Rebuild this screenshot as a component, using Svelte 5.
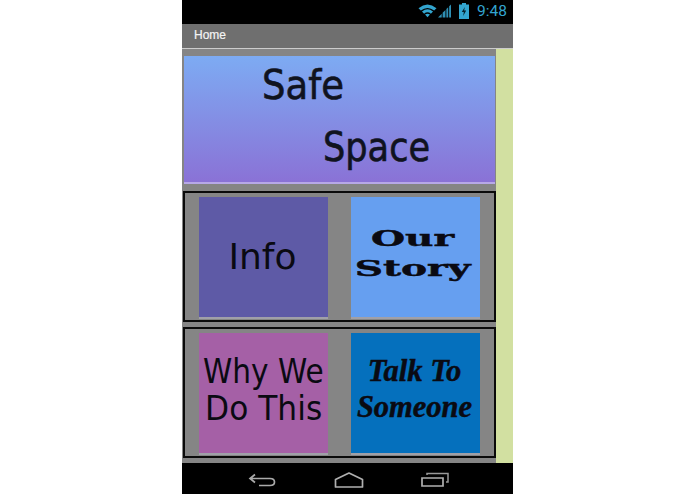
<script>
  const rows = [
    [
      { cls: 'info', lines: ['Info'] },
      { cls: 'story', lines: ['Our', 'Story'] }
    ],
    [
      { cls: 'why', lines: ['Why We', 'Do This'] },
      { cls: 'talk', lines: ['Talk To', 'Someone'] }
    ]
  ];
</script>

<div class="page">
  <div class="phone">
    <div class="status">
      <svg class="wifi" viewBox="0 0 20 15" width="19" height="15">
        <path d="M0.5 5 Q10 -2.5 19.5 5 L17 7.6 Q10 2 3 7.6Z" fill="#33a5cf" />
        <path d="M4.2 8.6 Q10 4 15.8 8.6 L13.6 10.8 Q10 8 6.4 10.8Z" fill="#33a5cf" />
        <path d="M7.4 11.8 Q10 10 12.6 11.8 L10 14.6Z" fill="#33a5cf" />
      </svg>
      <svg class="signal" viewBox="0 0 14 15" width="13" height="15">
        <path d="M0 15 L4 11 V15Z" fill="#2f8fb3" />
        <path d="M5 15 V10 L8 7 V15Z" fill="#2f8fb3" />
        <path d="M9 15 V6 L11 4 V15Z" fill="#2f8fb3" />
        <path d="M12 15 V3 L14 1 V15Z" fill="#2f8fb3" />
      </svg>
      <svg class="battery" viewBox="0 0 10 16" width="10" height="16">
        <path d="M3 0 H7 V1.5 H10 V16 H0 V1.5 H3Z" fill="#33a5cf" />
        <path d="M5.8 4 L2.8 9 H4.8 L4.2 13 L7.2 7.6 H5.2Z" fill="#06222c" />
      </svg>
      <span class="time">9:48</span>
    </div>
    <div class="titlebar">Home</div>
    <div class="body">
      <div class="content">
        <div class="banner">
          <span class="safe">Safe</span>
          <span class="space">Space</span>
        </div>
        {#each rows as row}
          <div class="row">
            {#each row as tile}
              <div class="tile {tile.cls}">
                {#each tile.lines as line}
                  <span>{line}</span>
                {/each}
              </div>
            {/each}
          </div>
        {/each}
      </div>
      <div class="side"></div>
    </div>
    <div class="nav">
      <svg viewBox="0 0 28 14" width="28" height="14">
        <path d="M7 1.5 L2 5.5 L7 9.5 M2 5.5 H22 Q26.5 5.5 26.5 9 Q26.5 12.5 22 12.5 H11" fill="none" stroke="#aaa" stroke-width="1.7" />
      </svg>
      <svg viewBox="0 0 30 16" width="30" height="16">
        <path d="M15 1 L28.5 7.5 V15 H1.5 V7.5Z" fill="none" stroke="#b0b0b0" stroke-width="1.7" stroke-linejoin="round" />
      </svg>
      <svg viewBox="0 0 28 15" width="28" height="15">
        <path d="M1 6 H22 V14 H1Z" fill="none" stroke="#b0b0b0" stroke-width="1.7" />
        <path d="M6 3 V1.5 H27 V10 H25" fill="none" stroke="#999" stroke-width="1.5" />
      </svg>
    </div>
  </div>
</div>

<style>
  :global(body) {
    background: #fff;
    font-family: "Liberation Sans", sans-serif;
  }
  .page {
    width: 695px;
    height: 494px;
    display: flex;
    justify-content: center;
    overflow: hidden;
  }
  .phone {
    width: 331px;
    height: 494px;
    display: flex;
    flex-direction: column;
  }
  .status {
    height: 24px;
    flex: none;
    background: #000;
    display: flex;
    align-items: center;
    justify-content: flex-end;
    padding: 0 6px 3px 0;
    box-sizing: border-box;
  }
  .wifi { margin-right: 1px; }
  .signal { margin-right: 8px; }
  .battery { margin-right: 8px; }
  .time {
    color: #33a5cf;
    font-family: Roboto, sans-serif;
    font-size: 15.5px;
    line-height: 20px;
  }
  .titlebar {
    height: 25px;
    flex: none;
    background: #6f6f6f;
    color: #f4f4f4;
    font-size: 12px;
    line-height: 22px;
    padding-left: 12px;
    box-sizing: border-box;
    border-bottom: 1px solid #ccc;
    -webkit-text-stroke: 0.2px #f4f4f4;
  }
  .body {
    flex: 1;
    display: flex;
    min-height: 0;
  }
  .content {
    width: 314px;
    background: #858585;
    padding: 7px 0 0 1px;
    box-sizing: border-box;
    display: flex;
    flex-direction: column;
  }
  .side {
    flex: 1;
    background: #d2e0a1;
  }
  .banner {
    width: 311px;
    margin-left: 1px;
    height: 128px;
    flex: none;
    box-sizing: border-box;
    background: linear-gradient(#7dabf3, #8a72d6);
    border-bottom: 2px solid #b7a8e8;
    font-family: "DejaVu Sans", sans-serif;
    color: #10131f;
    display: flex;
    flex-direction: column;
    margin-bottom: 7px;
  }
  .safe, .space {
    align-self: flex-start;
    font-size: 37px;
    line-height: 44px;
    -webkit-text-stroke: 0.6px #10131f;
    transform-origin: left center;
  }
  .safe { margin: 8px 0 0 78px; transform: scaleY(1.12); }
  .space { margin: 18px 0 0 139px; transform: scale(0.95, 1.12); }
  .row {
    width: 313px;
    height: 131px;
    flex: none;
    box-sizing: border-box;
    border: 2px solid #0a0a0a;
    display: flex;
    gap: 23px;
    padding: 4px 0 0 14px;
    margin-bottom: 5px;
  }
  .tile {
    width: 129px;
    height: 122px;
    display: flex;
    flex-direction: column;
    align-items: center;
    justify-content: flex-start;
    box-sizing: border-box;
    color: #0a0a12;
    border-bottom: 2px solid #a0a0a8;
  }
  .tile span { display: block; white-space: nowrap; }
  .info {
    background: #5e5aa6;
    font-family: "DejaVu Sans", sans-serif;
    font-size: 36px;
    line-height: 42px;
    padding: 39px 2px 0 0;
  }
  .story {
    background: #669ff0;
    font-family: "DejaVu Serif", serif;
    font-weight: 700;
    font-size: 24px;
    line-height: 30px;
    padding: 27px 6px 0 0;
    -webkit-text-stroke: 0.5px #0a0a12;
  }
  .story span { transform: scale(1.63, 0.9); }
  .why {
    background: #a560a6;
    font-family: "DejaVu Sans", sans-serif;
    font-size: 34px;
    line-height: 37px;
    padding-top: 20px;
  }
  .why span { transform: scaleX(0.87); }
  .why span:last-child { transform: scaleX(0.92); }
  .talk {
    background: #0570bd;
    font-family: "Liberation Serif", serif;
    font-weight: 700;
    font-style: italic;
    font-size: 30.5px;
    line-height: 36px;
    padding: 20px 2px 0 0;
    -webkit-text-stroke: 0.5px #0a0a12;
  }
  .nav {
    height: 31px;
    flex: none;
    background: #000;
    display: flex;
    align-items: center;
    justify-content: space-between;
    padding: 2px 64px 0 66px;
    box-sizing: border-box;
  }
</style>
